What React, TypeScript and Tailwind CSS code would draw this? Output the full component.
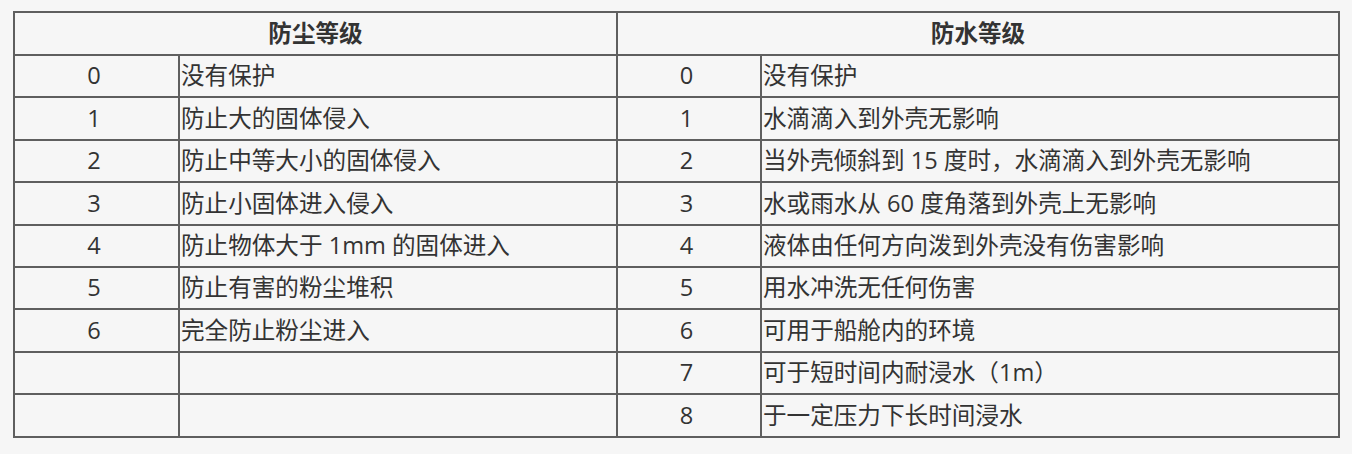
const dust = [
  "没有保护",
  "防止大的固体侵入",
  "防止中等大小的固体侵入",
  "防止小固体进入侵入",
  "防止物体大于 1mm 的固体进入",
  "防止有害的粉尘堆积",
  "完全防止粉尘进入",
];

const water = [
  "没有保护",
  "水滴滴入到外壳无影响",
  "当外壳倾斜到 15 度时，水滴滴入到外壳无影响",
  "水或雨水从 60 度角落到外壳上无影响",
  "液体由任何方向泼到外壳没有伤害影响",
  "用水冲洗无任何伤害",
  "可用于船舱内的环境",
  "可于短时间内耐浸水（1m）",
  "于一定压力下长时间浸水",
];

export default function App() {
  const rows = water.map((w, i) => ({
    dustLevel: i < dust.length ? String(i) : "",
    dustText: dust[i] ?? "",
    waterLevel: String(i),
    waterText: w,
  }));

  return (
    <div
      className="w-[1352px] h-[454px] bg-[#f6f6f6] pt-[11px] pl-[13px] text-[#333] text-[23.6px] leading-none"
      style={{ fontFamily: '"Open Sans", "Noto Sans CJK SC", sans-serif' }}
    >
      <table className="table-fixed border-collapse w-[1325px]">
        <colgroup>
          <col className="w-[165px]" />
          <col className="w-[438px]" />
          <col className="w-[144px]" />
          <col className="w-[578px]" />
        </colgroup>
        <thead>
          <tr className="h-[43px]">
            <th colSpan={2} className="border-2 border-[#5f5f5f] font-bold text-center">
              防尘等级
            </th>
            <th colSpan={2} className="border-2 border-[#5f5f5f] font-bold text-center">
              防水等级
            </th>
          </tr>
        </thead>
        <tbody>
          {rows.map((r) => (
            <tr key={r.waterLevel} className="h-[42.4px]">
              <td className="border-2 border-[#5f5f5f] text-center pr-[5px]">{r.dustLevel}</td>
              <td className="border-2 border-[#5f5f5f] pl-[1px] whitespace-nowrap">{r.dustText}</td>
              <td className="border-2 border-[#5f5f5f] text-center pr-[5px]">{r.waterLevel}</td>
              <td className="border-2 border-[#5f5f5f] pl-[1px] whitespace-nowrap">{r.waterText}</td>
            </tr>
          ))}
        </tbody>
      </table>
    </div>
  );
}
